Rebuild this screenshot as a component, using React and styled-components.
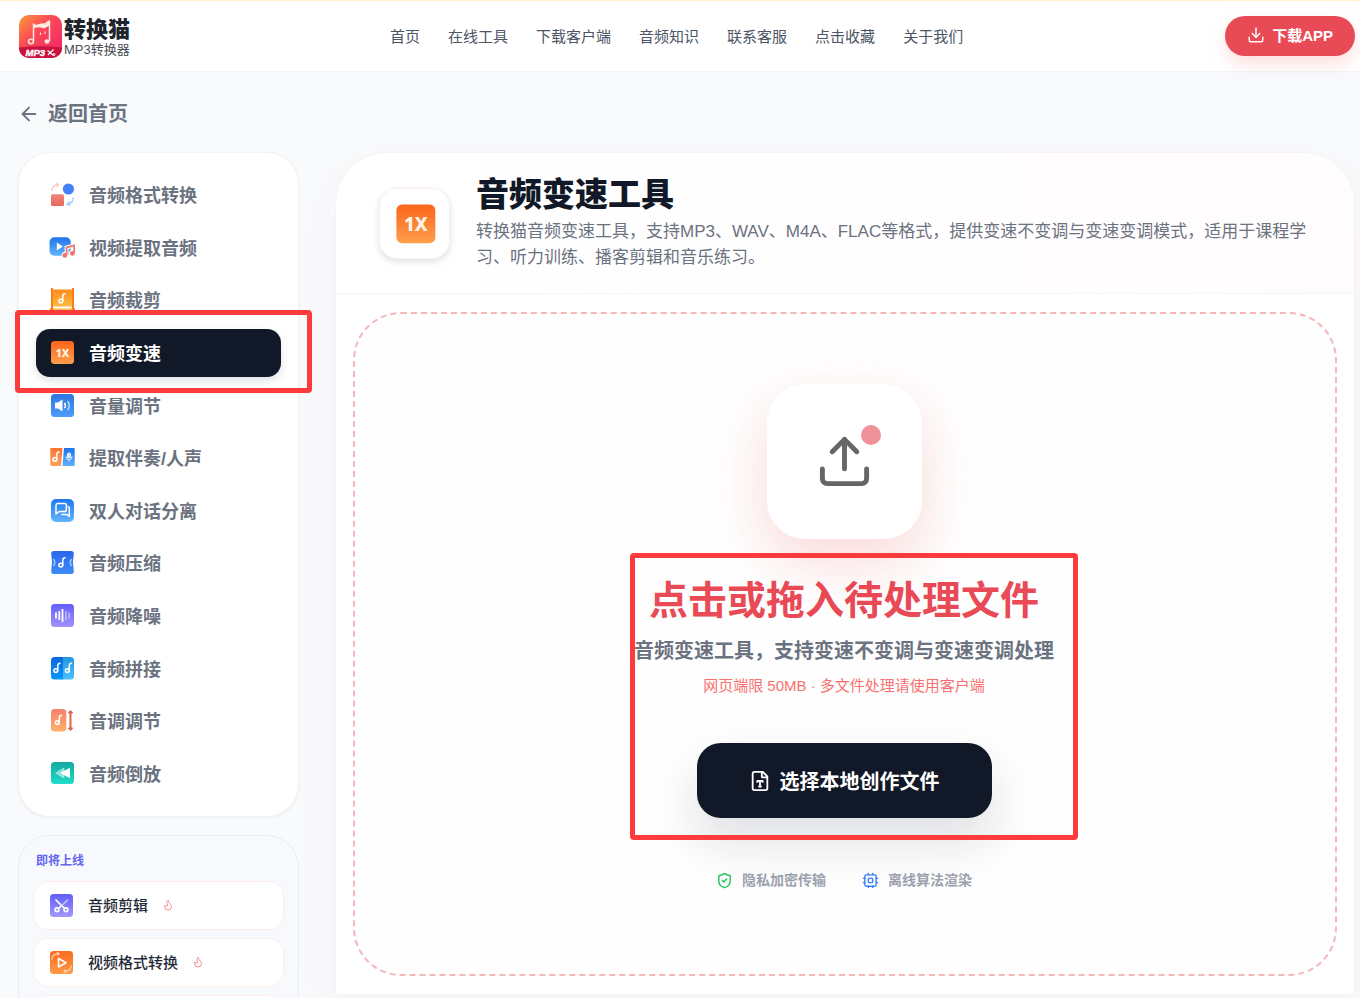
import React from "react";
import styled, { createGlobalStyle, css } from "styled-components";
import { ArrowLeft, Download, FileType, Flame, ShieldCheck, Upload } from "lucide-react";

const GlobalStyle = createGlobalStyle`
  * {
    box-sizing: border-box;
  }
  body {
    margin: 0;
    background: #f8fafc;
    color: #111827;
    font-family: "Liberation Sans", "Noto Sans CJK SC", sans-serif;
  }
  a {
    color: inherit;
    text-decoration: none;
  }
  button {
    font-family: inherit;
    border: 0;
    cursor: pointer;
  }
  ul {
    list-style: none;
    margin: 0;
    padding: 0;
  }
`;

const LINKS = ["首页", "在线工具", "下载客户端", "音频知识", "联系客服", "点击收藏", "关于我们"];

const Gradient = ({ id, from, to }) => (
  <linearGradient id={id} x1="0" y1="0" x2="0" y2="1">
    <stop offset="0" stopColor={from} />
    <stop offset="1" stopColor={to} />
  </linearGradient>
);

const Glyph = ({ id, from, to, size = 26, children }) => (
  <svg width={size} height={size} viewBox="0 0 26 26" fill="none" aria-hidden="true">
    <defs>
      <Gradient id={id} from={from} to={to} />
    </defs>
    {children}
  </svg>
);

const Tile = ({ id, ...rest }) => (
  <rect x="2" y="2" width="23" height="23" rx="3.5" fill={`url(#${id})`} {...rest} />
);

// single eighth note, x/y is the middle of the shape
const Note = ({ x, y, color = "#fff" }) => (
  <g stroke={color} strokeWidth="1.5" fill="none" strokeLinecap="round">
    <circle cx={x - 1.2} cy={y + 2.6} r="1.9" />
    <path d={`M${x + 0.8} ${y + 2.6}V${y - 2.4}q0-2.2 2.2-2.4`} />
  </g>
);

const FormatIcon = () => (
  <Glyph id="fmt" from="#f0857a" to="#e9695c">
    <path d="M2.8 9.8C3 6.500 5 4 9 3.600M6.800 2l2.600 1.500-1.600 2.700" stroke="#fbd0cc" strokeWidth="1.6" />
    <circle cx="19.400" cy="8" r="5.600" fill="#4580f7" />
    <rect x="2" y="13.300" width="13" height="11.700" rx="1.500" fill="url(#fmt)" />
    <path d="M24.300 16.500c0 3.500-2 6-5.800 6.800M20.600 20.200l-2.600 3.200 3.600 1" stroke="#b3d0fb" strokeWidth="1.6" />
  </Glyph>
);

const VideoIcon = () => (
  <Glyph id="vid" from="#1f74ea" to="#5fb4fd">
    <rect x="0.500" y="3.300" width="21.300" height="18.400" rx="5" fill="url(#vid)" />
    <path d="M7.800 8.500v8l6.200-4z" fill="#fff" />
    <g stroke="#fff" strokeWidth="4">
      <path d="M17.600 21V13.500l7.600-2.200V19" />
      <circle cx="15.800" cy="21.400" r="1.300" />
      <circle cx="23.400" cy="19.400" r="1.300" />
    </g>
    <path d="M17.600 21V13.500l7.600-2.200V19" stroke="#f0756a" strokeWidth="1.8" />
    <circle cx="15.800" cy="21.400" r="2.400" fill="#f0756a" />
    <circle cx="23.400" cy="19.400" r="2.400" fill="#f0756a" />
  </Glyph>
);

const CropIcon = () => (
  <Glyph id="crp" from="#fd8b1c" to="#fdba45">
    <rect x="3" y="3.500" width="21" height="17" fill="url(#crp)" />
    <path d="M3 2v23M24 2v23" stroke="#fb7f16" strokeWidth="2" />
    <path d="M1 23.500h4M22 23.500h4" stroke="#fb7f16" strokeWidth="2.500" />
    <path d="M4 21.500h19" stroke="#fff" />
    <path d="M4 23.500h19" stroke="#fdba45" strokeWidth="2" />
    <Note x={13} y={12.5} />
  </Glyph>
);

const SpeedIcon = ({ id = "spd", size }) => (
  <Glyph id={id} from="#fb641b" to="#fd9f4c" size={size}>
    <Tile id={id} />
    <text
      x="13.500"
      y="17.600"
      textAnchor="middle"
      fill="#fff4e6"
      fontFamily="Noto Sans, sans-serif"
      fontSize="11"
      fontWeight="800"
    >
      1X
    </text>
  </Glyph>
);

const VolumeIcon = () => (
  <Glyph id="vol" from="#2b77dc" to="#4f9bfb">
    <Tile id="vol" />
    <path d="M6 10.500h3l4.500-3v12l-4.500-3H6z" fill="#fff" />
    <path d="M15.500 10.800q1.800 2.700 0 5.400" stroke="#fff" strokeWidth="1.500" />
    <path d="M18.500 9q3.600 4.500 0 9" stroke="#c3dcfe" strokeWidth="1.500" />
  </Glyph>
);

const SplitIcon = () => (
  <Glyph id="spl" from="#fc742f" to="#fda35a">
    <defs>
      <Gradient id="spl2" from="#2173e8" to="#5cb1fd" />
    </defs>
    <path d="M2.500 4h11l-1.500 18h-9.500q-1.200 0-1.200-1.200V5.200Q1.300 4 2.500 4z" fill="url(#spl)" />
    <path d="M15 4h9.500q1.200 0 1.200 1.200v15.600q0 1.200-1.200 1.200H13.500z" fill="url(#spl2)" />
    <Note x={7} y={12.8} />
    <rect x="18.500" y="9" width="3" height="5" rx="1.500" fill="#cfe5ff" stroke="#fff" />
    <path d="M17 12.500q.4 3.300 3 3.300t3-3.300M20 16v1.800" stroke="#cfe5ff" strokeWidth="1.200" />
  </Glyph>
);

const DialogIcon = () => (
  <Glyph id="dlg" from="#1f78ee" to="#62b6fe">
    <Tile id="dlg" rx="5" />
    <path
      d="M8.500 6.500h7q1.800 0 1.800 1.800v4.400q0 1.800-1.800 1.800h-5.300l-3.200 2.500V8.300q0-1.800 1.500-1.800z"
      stroke="#fff"
      strokeWidth="1.500"
      strokeLinejoin="round"
    />
    <path
      d="M18.500 9.500q1.800 0 1.800 1.800v8l-2.600-1.800h-5.400"
      stroke="#fff"
      strokeWidth="1.500"
      strokeLinejoin="round"
    />
  </Glyph>
);

const CompressIcon = () => (
  <Glyph id="cmp" from="#2b66ea" to="#3f8bf8">
    <path
      d="M5 2h17q3 0 2.800 2.800-1.800 8.700 0 17.400Q25 25 22 25H5q-3 0-2.800-2.800 1.800-8.700 0-17.400Q2 2 5 2z"
      fill="url(#cmp)"
    />
    <path d="M4.500 10q2.400 3.500 0 7M22.500 10q-2.400 3.500 0 7" stroke="#a7c8fd" strokeWidth="1.500" />
    <Note x={13} y={13.5} />
  </Glyph>
);

const DenoiseIcon = () => (
  <Glyph id="dns" from="#625ffa" to="#a193fc">
    <Tile id="dns" />
    <path d="M7 10.500v6M10.300 9v9M13.500 7v13" stroke="#fff" strokeWidth="1.800" />
    <path d="M16.900 9v9M20.300 10.500v6" stroke="#fff" strokeOpacity=".5" strokeWidth="1.600" />
  </Glyph>
);

const JoinIcon = () => (
  <Glyph id="jn" from="#0b68dc" to="#0798fb">
    <defs>
      <Gradient id="jn2" from="#2199e0" to="#4dc0fc" />
    </defs>
    <path d="M5.500 2H14v22.500H5.500Q2 24.500 2 21V5.500Q2 2 5.500 2z" fill="url(#jn)" />
    <path d="M14 2h7.500Q25 2 25 5.500V21q0 3.500-3.500 3.500H14z" fill="url(#jn2)" />
    <Note x={8} y={13} />
    <Note x={19.5} y={13} />
  </Glyph>
);

const PitchIcon = () => (
  <Glyph id="ptc" from="#f5806e" to="#fdb06c">
    <rect x="2" y="2" width="15.300" height="22.500" rx="3.500" fill="url(#ptc)" />
    <Note x={9.5} y={13} />
    <path d="M21.500 5v17" stroke="#dd6450" strokeWidth="2" />
    <path d="M19.300 6l2.200-2.500L23.700 6zM19.300 21l2.200 2.500 2.200-2.500z" fill="#dd6450" stroke="#dd6450" strokeLinejoin="round" />
  </Glyph>
);

const ReverseIcon = () => (
  <Glyph id="rev" from="#11a8a0" to="#20dcca">
    <Tile id="rev" height="22" />
    <path d="M6.500 13l8.500-5v10z" fill="#fff" fillOpacity=".5" stroke="#fff" strokeOpacity=".4" strokeLinejoin="round" />
    <path d="M12 13l8.500-4.500v9z" fill="#fff" stroke="#fff" strokeLinejoin="round" />
  </Glyph>
);

const CutIcon = () => (
  <Glyph id="cut" from="#5f5ef9" to="#a498fb">
    <Tile id="cut" />
    <g stroke="#fff" strokeWidth="1.700" strokeLinecap="round">
      <path d="M8 8l8.500 8.500" />
      <path d="M19.500 8l-4.500 4.500" stroke="#c9c4ff" />
      <path d="M12.500 14.500l-2 2" />
      <circle cx="9" cy="17.800" r="1.900" />
      <circle cx="18" cy="17.800" r="1.900" />
    </g>
  </Glyph>
);

const VideoFormatIcon = () => (
  <Glyph id="vfm" from="#fb6a20" to="#fd9a46">
    <Tile id="vfm" />
    <path d="M10.500 9.500l7.500 4.200-7.500 4.300z" stroke="#fff" strokeWidth="1.600" strokeLinejoin="round" />
    <path
      d="M3.800 10.500Q4.300 5 10.500 4.600M9 3.200l2 1.400-1.300 1.800M23.300 16.500q-.5 5.500-6.700 6M18 23.800l-2-1.400 1.300-1.800"
      stroke="#ffd2ae"
      strokeWidth="1.300"
    />
  </Glyph>
);

const ChipIcon = () => (
  <svg
    width="17"
    height="17"
    viewBox="0 0 24 24"
    fill="none"
    stroke="#3b82f6"
    strokeWidth="2"
    strokeLinecap="round"
    strokeLinejoin="round"
    aria-hidden="true"
  >
    <rect x="4" y="4" width="16" height="16" rx="2" />
    <rect x="9" y="9" width="6" height="6" rx="1" />
    <path d="M15 2v2M15 20v2M2 15h2M2 9h2M20 15h2M20 9h2M9 2v2M9 20v2" />
  </svg>
);

const LogoMark = () => (
  <svg width="43" height="43" viewBox="0 0 43 43" fill="none" aria-hidden="true">
    <defs>
      <linearGradient id="logo" x1="0" y1="0" x2="1" y2="1">
        <stop offset="0" stopColor="#fb9a3c" />
        <stop offset=".4" stopColor="#fb4a55" />
        <stop offset="1" stopColor="#f0206a" />
      </linearGradient>
      <clipPath id="logoClip">
        <rect width="43" height="43" rx="10" />
      </clipPath>
    </defs>
    <g clipPath="url(#logoClip)">
      <rect width="43" height="43" fill="url(#logo)" />
      <path d="M0 32.500q21-2.500 43 0V43H0z" fill="#c91440" />
      <path d="M14.500 26V9q2 2 3.500 1.500 4-2 8.500-1.500 2-2.500 4-3v20" stroke="#ffe6dc" strokeWidth="1.500" strokeLinejoin="round" />
      <path d="M15 9.500q2 1.500 3 1 5-1.500 9-1l3-3v4.500q-3 1-5 2.500-5-2-10-.5z" fill="#fff0e8" />
      <ellipse cx="12" cy="26.500" rx="2.500" ry="2.200" stroke="#ffe6dc" strokeWidth="1.500" />
      <ellipse cx="28" cy="26.500" rx="2.500" ry="2.200" fill="#ffe6dc" />
      <path d="M21.500 17.500v2.500M26 16.500v2.500" stroke="#ffe6dc" strokeWidth="1.200" />
      <text x="6.500" y="41" fill="#fff" fontFamily="Liberation Sans, sans-serif" fontSize="9.500" fontWeight="700" fontStyle="italic" stroke="#fff" strokeWidth=".4">
        MP3
      </text>
      <path d="M28.500 35.500l6 5M34.500 34.500l-5.500 5.500" stroke="#fff" strokeWidth="1.200" />
      <circle cx="35" cy="39.500" r="1" stroke="#fff" />
    </g>
  </svg>
);

const TOOLS = [
  { name: "音频格式转换", Icon: FormatIcon },
  { name: "视频提取音频", Icon: VideoIcon },
  { name: "音频裁剪", Icon: CropIcon },
  { name: "音频变速", Icon: SpeedIcon, active: true },
  { name: "音量调节", Icon: VolumeIcon },
  { name: "提取伴奏/人声", Icon: SplitIcon },
  { name: "双人对话分离", Icon: DialogIcon },
  { name: "音频压缩", Icon: CompressIcon },
  { name: "音频降噪", Icon: DenoiseIcon },
  { name: "音频拼接", Icon: JoinIcon },
  { name: "音调调节", Icon: PitchIcon },
  { name: "音频倒放", Icon: ReverseIcon }
];

const COMING = [
  { name: "音频剪辑", Icon: CutIcon },
  { name: "视频格式转换", Icon: VideoFormatIcon }
];

const App = () => (
  <Page>
    <GlobalStyle />
    <Header>
      <Logo href="#">
        <LogoMark />
        <LogoText>
          <LogoName>转换猫</LogoName>
          <LogoSub>MP3转换器</LogoSub>
        </LogoText>
      </Logo>
      <TopNav>
        {LINKS.map(link => (
          <a key={link} href="#">
            {link}
          </a>
        ))}
      </TopNav>
      <DownloadButton>
        <Download size={18} />
        下载APP
      </DownloadButton>
    </Header>
    <Body>
      <BackLink href="#">
        <ArrowLeft size={22} />
        返回首页
      </BackLink>
      <Columns>
        <Sidebar>
          <ToolList>
            {TOOLS.map(({ name, Icon, active }) => (
              <ToolItem key={name}>
                <ToolLink href="#" $active={active}>
                  <Icon />
                  {name}
                </ToolLink>
                {active && <Marker $inset="-19px -31px -16px -21px" />}
              </ToolItem>
            ))}
          </ToolList>
          <Coming>
            <ComingTitle>即将上线</ComingTitle>
            <ComingList>
              {COMING.map(({ name, Icon }) => (
                <ComingItem key={name}>
                  <Icon />
                  {name}
                  <Flame size={12} color="#f98d8d" />
                </ComingItem>
              ))}
              <ComingItem />
            </ComingList>
          </Coming>
        </Sidebar>
        <Panel>
          <PanelHeader>
            <ToolBadge>
              <SpeedIcon id="spdLarge" size={44} />
            </ToolBadge>
            <div>
              <Title>音频变速工具</Title>
              <Description>
                转换猫音频变速工具，支持MP3、WAV、M4A、FLAC等格式，提供变速不变调与变速变调模式，适用于课程学习、听力训练、播客剪辑和音乐练习。
              </Description>
            </div>
          </PanelHeader>
          <DropZone>
            <UploadCard>
              <Upload size={59} />
              <Dot />
            </UploadCard>
            <Prompt>
              <PromptTitle>点击或拖入待处理文件</PromptTitle>
              <PromptText>音频变速工具，支持变速不变调与变速变调处理</PromptText>
              <PromptHint>网页端限 50MB · 多文件处理请使用客户端</PromptHint>
              <ChooseButton>
                <FileType size={22} />
                选择本地创作文件
              </ChooseButton>
              <Marker $inset="-24px -24px -22px -4px" />
            </Prompt>
            <Perks>
              <Perk>
                <ShieldCheck size={17} color="#22c55e" />
                隐私加密传输
              </Perk>
              <Perk>
                <ChipIcon />
                离线算法渲染
              </Perk>
            </Perks>
          </DropZone>
        </Panel>
      </Columns>
    </Body>
  </Page>
);

export default App;

const Page = styled.div`
  height: 100vh;
  overflow: hidden;
`;

const Header = styled.header`
  display: flex;
  align-items: center;
  justify-content: space-between;
  height: 72px;
  padding: 0 5px 0 19px;
  background: #fff;
  border-top: 1px solid #fff3c9;
  border-bottom: 1px solid #f1f4f8;
`;

const Logo = styled.a`
  display: flex;
  align-items: center;
  gap: 2px;
`;

const LogoText = styled.span`
  display: flex;
  flex-direction: column;
  padding-top: 4px;
  color: #20242c;
`;

const LogoName = styled.strong`
  font-size: 22px;
  line-height: 24px;
  font-weight: 900;
`;

const LogoSub = styled.span`
  font-size: 13px;
  line-height: 16px;
  color: #4a4e57;
`;

const TopNav = styled.nav`
  display: flex;
  gap: 28px;
  padding: 2px 2px 0 0;
  font-size: 15px;
  line-height: 22px;
  color: #4b5563;
`;

const DownloadButton = styled.button`
  display: flex;
  align-items: center;
  gap: 7px;
  height: 40px;
  padding: 0 22px 3px;
  border-radius: 20px;
  background: #e84a56;
  color: #fff;
  font-size: 15px;
  font-weight: 700;
  box-shadow: 0 8px 16px rgba(254, 202, 202, 0.6);
`;

const Body = styled.div`
  padding: 29px 5px 0 18px;
`;

const BackLink = styled.a`
  display: inline-flex;
  align-items: center;
  gap: 8px;
  margin-bottom: 25px;
  font-size: 20px;
  line-height: 26px;
  font-weight: 700;
  color: #6b7280;
`;

const Columns = styled.div`
  display: flex;
  align-items: flex-start;
  gap: 36px;
`;

const Sidebar = styled.aside`
  flex: 0 0 281px;
`;

const ToolList = styled.ul`
  display: flex;
  flex-direction: column;
  justify-content: space-between;
  min-height: 665px;
  padding: 18px 17px;
  background: #fff;
  border: 1px solid #f1f3f6;
  border-radius: 32px;
  box-shadow: 0 1px 3px rgba(17, 24, 39, 0.06);
`;

const ToolItem = styled.li`
  position: relative;
`;

const ToolLink = styled.a`
  display: flex;
  align-items: center;
  gap: 14px;
  height: 48px;
  padding: 0 13px 2px;
  border-radius: 14px;
  font-size: 18px;
  font-weight: 700;
  color: #6b7280;
  ${p =>
    p.$active &&
    css`
      background: #111827;
      color: #fff;
      box-shadow: 0 4px 8px rgba(17, 24, 39, 0.12);
    `}
`;

const Marker = styled.span`
  position: absolute;
  inset: ${p => p.$inset};
  z-index: 2;
  border: 5px solid #fd3a3c;
  border-radius: 4px;
  pointer-events: none;
`;

const Coming = styled.section`
  margin-top: 18px;
  padding: 17px 14px;
  background: #f8f9fd;
  border: 1px solid #eaecf5;
  border-radius: 32px;
`;

const ComingTitle = styled.h2`
  margin: 0 0 12px 3px;
  font-size: 12px;
  line-height: 16px;
  font-weight: 700;
  color: #6366f1;
`;

const ComingList = styled.ul`
  display: flex;
  flex-direction: column;
  gap: 8px;
`;

const ComingItem = styled.li`
  display: flex;
  align-items: center;
  gap: 14px;
  height: 49px;
  padding: 0 14px 2px;
  background: #fff;
  border: 1px solid #ffeded;
  border-radius: 15px;
  font-size: 15px;
  font-weight: 500;
  color: #1f2937;
`;

const Panel = styled.main`
  flex: 1;
  min-width: 0;
  background: #fff;
  border: 1px solid #f5f3f5;
  border-radius: 52px 52px 0 0;
  box-shadow: 0 20px 50px rgba(232, 74, 86, 0.05);
`;

const PanelHeader = styled.div`
  display: flex;
  align-items: center;
  gap: 26px;
  padding: 22px 43px;
  border-bottom: 1px solid #f8f4f6;
  border-radius: 52px 52px 0 0;
  background: linear-gradient(90deg, #fff, #fffcfd);
`;

const ToolBadge = styled.div`
  display: flex;
  flex: 0 0 71px;
  align-items: center;
  justify-content: center;
  height: 71px;
  background: #fff;
  border: 1px solid #ffeeee;
  border-radius: 18px;
  box-shadow: 0 3px 6px rgba(17, 24, 39, 0.12);
`;

const Title = styled.h1`
  margin: 0 0 4px;
  font-size: 33px;
  line-height: 40px;
  font-weight: 900;
  color: #111827;
`;

const Description = styled.p`
  margin: 0;
  font-size: 17px;
  line-height: 26px;
  color: #6b7280;
`;

const DropZone = styled.section`
  display: flex;
  flex-direction: column;
  align-items: center;
  margin: 18px 17px;
  padding: 70px 22px 84px 20px;
  border: 2px dashed #f6b7bb;
  border-radius: 48px;
  background: #fefefe;
`;

const UploadCard = styled.div`
  position: relative;
  z-index: 1;
  display: flex;
  align-items: center;
  justify-content: center;
  width: 155px;
  height: 155px;
  border-radius: 38px;
  background: #fff;
  color: #666;
  box-shadow: 0 22px 56px rgba(239, 68, 68, 0.2);
`;

const Dot = styled.span`
  position: absolute;
  top: 41px;
  right: 41px;
  width: 20px;
  height: 20px;
  border-radius: 50%;
  background: #f1929a;
`;

const Prompt = styled.div`
  position: relative;
  display: flex;
  flex-direction: column;
  align-items: center;
  margin-top: 38px;
`;

const PromptTitle = styled.h2`
  margin: 0;
  font-size: 39px;
  line-height: 48px;
  font-weight: 700;
  color: #e84a56;
`;

const PromptText = styled.p`
  margin: 12px 0 9px;
  font-size: 20px;
  line-height: 28px;
  font-weight: 700;
  color: #6b7280;
`;

const PromptHint = styled.p`
  margin: 0;
  font-size: 15px;
  line-height: 24px;
  color: #f87171;
`;

const ChooseButton = styled.button`
  display: flex;
  align-items: center;
  justify-content: center;
  gap: 9px;
  height: 75px;
  margin-top: 45px;
  padding: 0 52px;
  border-radius: 24px;
  background: #111827;
  color: #fff;
  font-size: 20px;
  font-weight: 700;
  box-shadow: 0 24px 48px rgba(17, 24, 39, 0.13);
`;

const Perks = styled.div`
  display: flex;
  gap: 36px;
  margin-top: 52px;
`;

const Perk = styled.span`
  display: flex;
  align-items: center;
  gap: 9px;
  font-size: 14px;
  line-height: 20px;
  font-weight: 700;
  color: #9ca3af;
`;
